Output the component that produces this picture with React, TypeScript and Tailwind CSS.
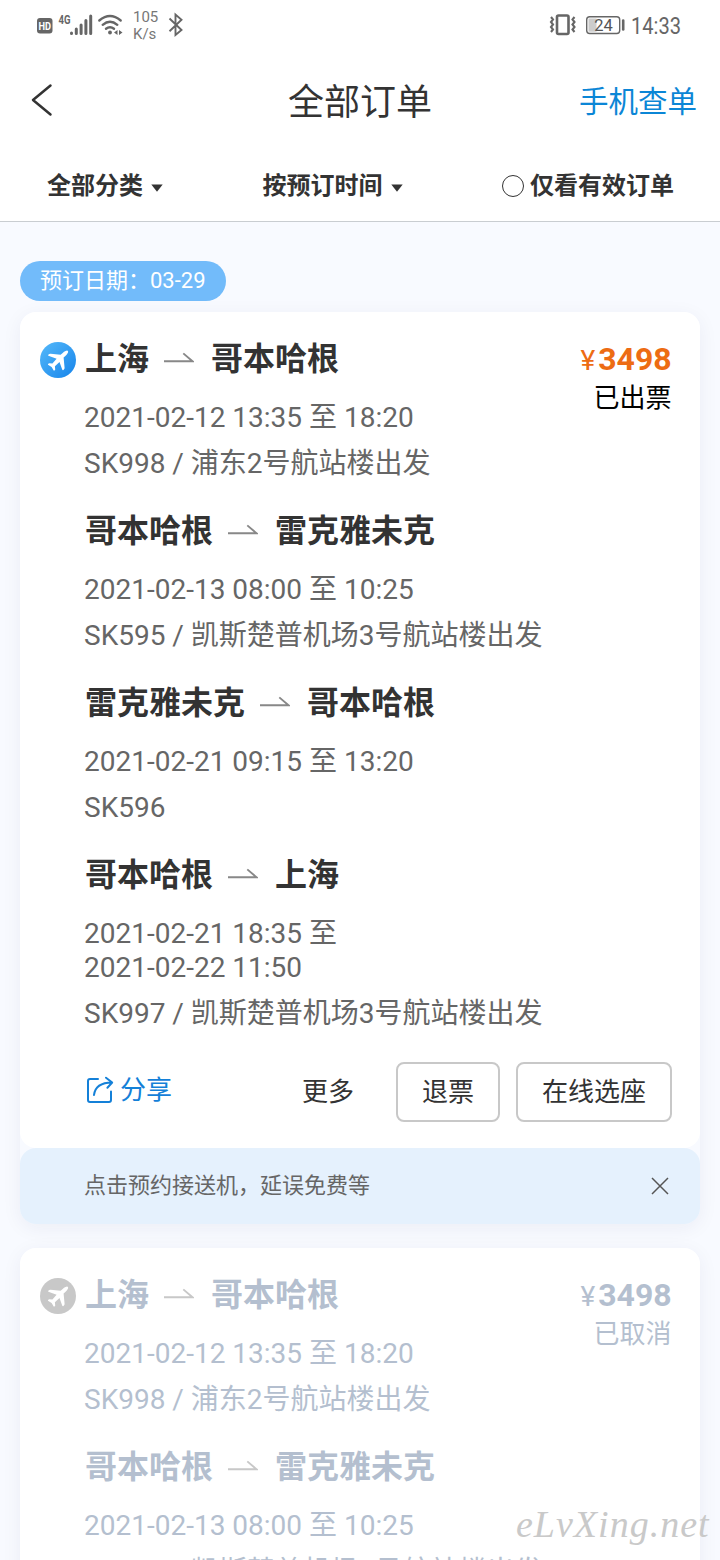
import React from "react";

type Leg = { from: string; to: string; times: string[]; flight: string };

const legs: Leg[] = [
  { from: "上海", to: "哥本哈根", times: ["2021-02-12 13:35 至 18:20"], flight: "SK998 / 浦东2号航站楼出发" },
  { from: "哥本哈根", to: "雷克雅未克", times: ["2021-02-13 08:00 至 10:25"], flight: "SK595 / 凯斯楚普机场3号航站楼出发" },
  { from: "雷克雅未克", to: "哥本哈根", times: ["2021-02-21 09:15 至 13:20"], flight: "SK596" },
  { from: "哥本哈根", to: "上海", times: ["2021-02-21 18:35 至", "2021-02-22 11:50"], flight: "SK997 / 凯斯楚普机场3号航站楼出发" },
];

function StatusBar() {
  return (
    <div className="flex h-[50px] items-center justify-between pl-9 pr-[38px] text-[#666]">
      <div className="flex h-full items-center">
        <svg width="96" height="50" viewBox="0 0 96 50" fill="none">
          <rect x="1" y="18" width="15.500" height="15.500" rx="3" fill="#666" />
          <text x="8.700" y="29.600" textAnchor="middle" textLength="12.500" lengthAdjust="spacingAndGlyphs" fontSize="10.500" fontWeight="700" fill="#fff">HD</text>
          <text x="22.500" y="23.500" textLength="12" lengthAdjust="spacingAndGlyphs" fontSize="13" fontWeight="700" fill="#666">4G</text>
          <path d="M35.500 33v.5M40.300 29v4.500M45.100 25v8.500M49.900 20.500v13M54.700 16v17.500" stroke="#666" strokeWidth="3" strokeLinecap="round" />
          <path d="M63.300 20.500Q74 11.500 84.700 20.500M66.700 24.800Q74 18.500 81.300 24.800M70 28.800Q74 25.500 78 28.800" stroke="#666" strokeWidth="2.400" strokeLinecap="round" />
          <circle cx="74" cy="32.500" r="1.900" fill="#666" />
          <path d="M81.500 30v5l-3.500-2.500zM83 30v5l3.500-2.500z" fill="#666" />
        </svg>
        <div className="ml-[1px] w-[26px] pt-[2px] text-[15px] leading-[17px] text-[#777]">
          <div>105</div>
          <div>K/s</div>
        </div>
        <svg className="ml-[8px]" width="18" height="50" viewBox="0 0 18 50" fill="none" stroke="#666" strokeWidth="1.900">
          <path d="M2.500 18.500L14.500 30 8.500 35V14.500l6 5.300-12 11.400" />
        </svg>
      </div>
      <div className="flex h-full items-center">
        <svg width="76" height="50" viewBox="0 0 76 50" fill="none" stroke="#666">
          <rect x="8" y="15.500" width="11.500" height="18.500" rx="1.500" strokeWidth="2.600" />
          <path d="M2 17l2 2.500-2 2.500 2 2.500-2 2.500 2 2.500-2 2.500M25.500 17l-2 2.500 2 2.500-2 2.500 2 2.500-2 2.500 2 2.500" strokeWidth="2.100" />
          <rect x="37.700" y="16.700" width="33" height="16.800" rx="3" strokeWidth="1.400" />
          <rect x="39.500" y="18.500" width="8" height="13.200" fill="#ccc" stroke="none" />
          <text x="54.500" y="31" textAnchor="middle" fontSize="16.500" fill="#555" stroke="none">24</text>
          <path d="M74.200 20.500v9" strokeWidth="2.600" strokeLinecap="round" />
        </svg>
        <svg width="57" height="50" viewBox="0 0 57 50">
          <text x="6" y="34" fontSize="23" textLength="50" lengthAdjust="spacingAndGlyphs" fill="#666">14:33</text>
        </svg>
      </div>
    </div>
  );
}

function Caret() {
  return (
    <svg width="12" height="8" viewBox="0 0 12 8" className="mt-[3px] ml-[8px]">
      <path d="M.3.500h11.400L6 7.700z" fill="#333" />
    </svg>
  );
}

function Plane({ muted }: { muted?: boolean }) {
  return (
    <svg width="36" height="36" viewBox="0 0 36 36" className="mt-[5px] shrink-0">
      <defs>
        <linearGradient id="planeFill" x1="0" y1="0" x2="1" y2="1">
          <stop offset="0" stopColor="#55b9fa" />
          <stop offset="1" stopColor="#1684ea" />
        </linearGradient>
      </defs>
      <circle cx="18" cy="18" r="18" fill={muted ? "#c8c8c8" : "url(#planeFill)"} />
      <path
        d="M27 8.400c1 .2 1.400 1 1 2-.6 1.500-1.700 2.700-4.400 5.200l1 10.400c0 .700-1 2.200-1.600 2.200-.4 0-.7-.300-.8-.700L19.500 20l-4.600 4.200.3 3.200c0 .500-1 1.500-1.500 1.200L11.600 25 8 22.800c-.3-.500.700-1.500 1.300-1.500l3.100.2 4.200-4.700-7.500-2.700c-.9-.4-1.300-.900-.8-1.300.7-.7 1.400-1.200 2.300-1.100l10 1.100c2.600-2.600 4.400-4 6.400-4.400z"
        fill="#fff"
      />
    </svg>
  );
}

function RouteArrow({ muted }: { muted?: boolean }) {
  return (
    <svg width="30" height="12" viewBox="0 0 30 12" fill="none" className="mr-[17px] mb-[3px] ml-[15px]">
      <path d="M0 9.300h28.500L19.300 1.400" stroke={muted ? "#c8c8c8" : "#888"} strokeWidth="1.900" />
    </svg>
  );
}

function Order({ status, muted, children }: { status: string; muted?: boolean; children?: React.ReactNode }) {
  const title = muted ? "text-[#b4bfcf]" : "text-[#333]";
  const detail = muted ? "text-[#b4bfcf]" : "text-[#666]";
  return (
    <section className="rounded-2xl bg-white pt-[25px] pl-5 pr-7 pb-[26px]">
      <div className="flex items-start">
        <Plane muted={muted} />
        <div className="ml-2 flex flex-1 flex-col gap-[28px]">
          {legs.map((leg) => (
            <div key={leg.from + leg.to}>
              <h2 className={`flex h-11 items-center pl-[1px] text-[32px] font-bold leading-[44px] ${title}`}>
                <span>{leg.from}</span>
                <RouteArrow muted={muted} />
                <span>{leg.to}</span>
              </h2>
              <div className={`mt-5 text-[28px] leading-[34px] whitespace-nowrap ${detail}`}>
                {leg.times.map((t) => (
                  <p key={t}>{t}</p>
                ))}
                <p className="mt-3">{leg.flight}</p>
              </div>
            </div>
          ))}
        </div>
        <div className="w-[130px] shrink-0 pr-[1px] text-right">
          <div className={`flex h-11 items-center justify-end ${muted ? "text-[#b4bfcf]" : "text-[#ed6c13]"}`}>
            <span className="mt-[3px] mr-[3px] text-[28px]">¥</span>
            <span className="text-[32px] font-bold">3498</span>
          </div>
          <div className={`pt-[1px] text-[26px] leading-8 ${muted ? "text-[#b4bfcf]" : "text-black"}`}>{status}</div>
        </div>
      </div>
      {children}
    </section>
  );
}

export default function App() {
  return (
    <div className="relative h-[1560px] w-[720px] overflow-hidden bg-[#f8faff] font-[Roboto,'Noto_Sans_CJK_SC',sans-serif] text-[#333]">
      <header className="h-[222px] border-b border-[#c9cdd1] bg-white">
        <StatusBar />
        <div className="grid h-[100px] grid-cols-3 items-center pl-[31px] pr-[23px]">
          <svg width="22" height="34" viewBox="0 0 22 34" fill="none" className="mb-[1px]">
            <path d="M19.500 2.500L2 17l17.500 14.500" stroke="#333" strokeWidth="2.500" strokeLinecap="round" strokeLinejoin="round" />
          </svg>
          <h1 className="pt-[6px] pr-[8px] text-center text-[36px]">全部订单</h1>
          <a className="pt-[4px] text-right text-[29.500px] text-[#0b86d6]">手机查单</a>
        </div>
        <nav className="flex h-[72px] items-center justify-between pr-[46px] pl-[47px] text-[24px] font-bold">
          <span className="flex items-center">全部分类<Caret /></span>
          <span className="flex items-center">按预订时间<Caret /></span>
          <span className="flex items-center">
            <i className="mr-[6px] h-[22px] w-[22px] rounded-full border-[1.500px] border-[#333]" />
            仅看有效订单
          </span>
        </nav>
      </header>
      <main className="px-5 pt-[39px]">
        <div className="mb-[11px] flex h-10 w-[206px] items-center rounded-full bg-[#72bbfa] pb-[2px] pl-5 text-[22px] whitespace-nowrap text-white">
          预订日期：03-29
        </div>
        <div className="rounded-2xl shadow-[0_4px_20px_rgba(30,40,80,0.06)]">
          <Order status="已出票">
            <div className="mt-[31px] flex h-[60px] items-center text-[26px]">
              <a className="mb-1 ml-[46px] flex items-center text-[#1480d8]">
                <svg width="28" height="28" viewBox="0 0 28 28" fill="none" stroke="#1480d8" strokeWidth="2" strokeLinecap="round" strokeLinejoin="round" className="mr-[6px]">
                  <path d="M12 3H4a2 2 0 0 0-2 2v19a2 2 0 0 0 2 2h19a2 2 0 0 0 2-2V15.500M8 19C9 11 14.500 6.500 26 6.500M20 1.700l6.200 4.800-4.800 5.200" />
                </svg>
                分享
              </a>
              <span className="mr-[42px] ml-auto">更多</span>
              <button className="h-[60px] w-[104px] rounded-lg border-2 border-[#c8c8c8]">退票</button>
              <button className="ml-4 h-[60px] w-[156px] rounded-lg border-2 border-[#c8c8c8]">在线选座</button>
            </div>
          </Order>
          <div className="flex h-[76px] items-center justify-between rounded-2xl bg-[#e5f1fd] pr-[31px] pl-16 text-[22px] text-[#666]">
            <span className="pb-[2px]">点击预约接送机，延误免费等</span>
            <svg width="18" height="18" viewBox="0 0 18 18" fill="none" stroke="#555" strokeWidth="1.500">
              <path d="M1 1l16 16M17 1L1 17" />
            </svg>
          </div>
        </div>
        <div className="mt-6 rounded-2xl shadow-[0_4px_20px_rgba(30,40,80,0.06)]">
          <Order status="已取消" muted />
        </div>
      </main>
      <div className="absolute top-[1501px] left-[516px] z-20 font-['Liberation_Serif',serif] text-[38px] leading-[46px] tracking-[1px] text-[#c9c9c9] italic">
        eLvXing.net
      </div>
    </div>
  );
}
